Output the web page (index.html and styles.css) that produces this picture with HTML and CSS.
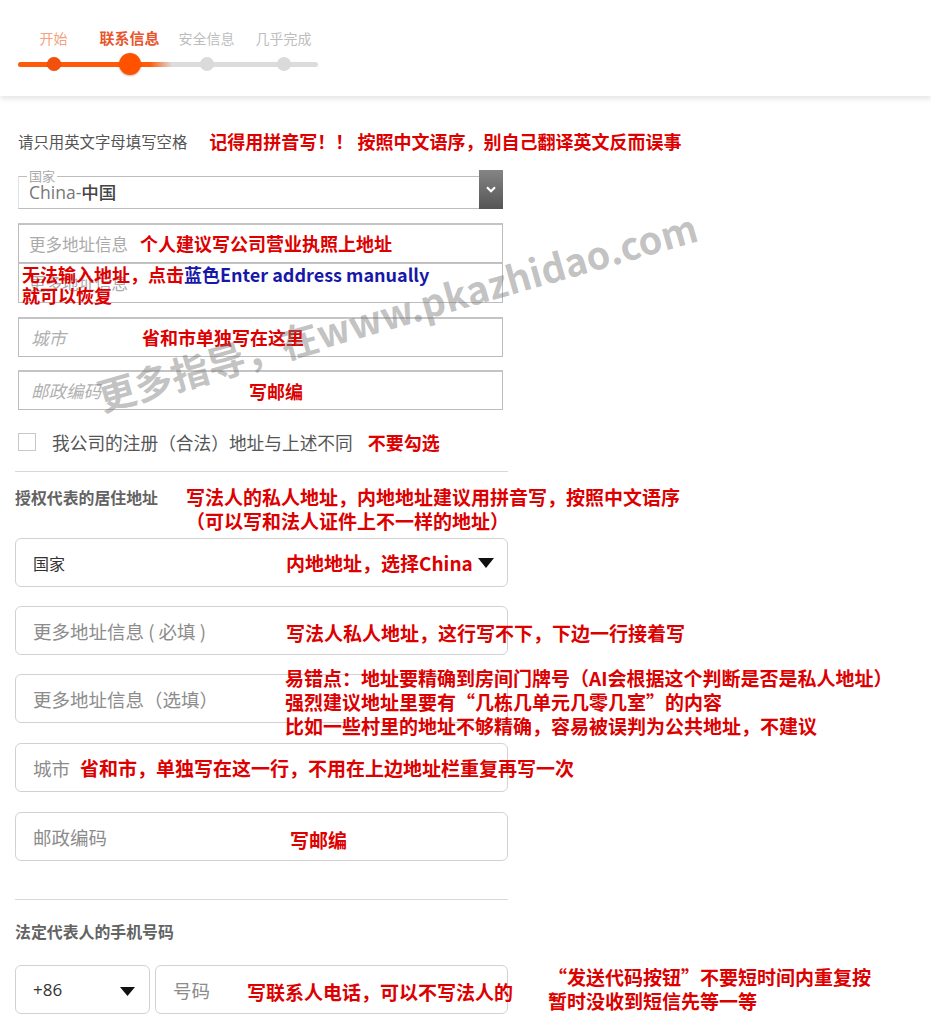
FILE: index.html
```html
<!DOCTYPE html>
<html lang="zh-CN">
<head>
<meta charset="utf-8">
<title>联系信息</title>
<link rel="stylesheet" href="styles.css">
</head>
<body>
<header class="top">
  <div class="stepper">
    <div class="track"><div class="track-fill"></div></div>
    <div class="steps">
      <div class="step done"><span class="step-label">开始</span><span class="dot-slot"><span class="dot"></span></span></div>
      <div class="step current"><span class="step-label">联系信息</span><span class="dot-slot"><span class="dot"></span></span></div>
      <div class="step todo"><span class="step-label">安全信息</span><span class="dot-slot"><span class="dot"></span></span></div>
      <div class="step todo"><span class="step-label">几乎完成</span><span class="dot-slot"><span class="dot"></span></span></div>
    </div>
  </div>
</header>

<section class="legacy">
  <div class="instr">
    <span class="instr-text">请只用英文字母填写空格</span>
    <span class="inline-note">记得用拼音写！！ 按照中文语序，别自己翻译英文反而误事</span>
  </div>

  <div class="fs">
    <div class="fs-main">
      <span class="fs-legend">国家</span>
      <span class="fs-value">China-<b>中国</b></span>
    </div>
    <div class="fs-btn">
      <svg width="10" height="7" viewBox="0 0 10 7"><path d="M1 1.2 L5 5.2 L9 1.2" fill="none" stroke="#fff" stroke-width="2.2"/></svg>
    </div>
  </div>

  <div class="obox first">
    <span class="ph">更多地址信息</span>
    <span class="note n-addr1">个人建议写公司营业执照上地址</span>
  </div>
  <div class="obox stack">
    <span class="ph">更多地址信息</span>
    <span class="note n-addr2">无法输入地址，点击<span class="blue">蓝色Enter address manually</span><br>就可以恢复</span>
  </div>
  <div class="obox">
    <span class="ph it">城市</span>
    <span class="note n-city">省和市单独写在这里</span>
  </div>
  <div class="obox near">
    <span class="ph it">邮政编码</span>
    <span class="note n-zip">写邮编</span>
  </div>

  <div class="check-row">
    <span class="checkbox"></span>
    <span class="check-label">我公司的注册（合法）地址与上述不同</span>
    <span class="inline-note">不要勾选</span>
  </div>
</section>

<div class="divider d1"></div>

<section class="modern">
  <div class="heading-row">
    <span class="heading">授权代表的居住地址</span>
    <span class="note lg n-head">写法人的私人地址，内地地址建议用拼音写，按照中文语序<br>（可以写和法人证件上不一样的地址）</span>
  </div>

  <div class="mbox first">
    <span class="mval">国家</span>
    <span class="note lg n-country">内地地址，选择China<svg class="tri" width="16" height="10" viewBox="0 0 16 10"><path d="M0 0 H16 L8 10 Z" fill="#111"/></svg></span>
  </div>
  <div class="mbox">
    <span class="mph">更多地址信息 ( 必填 )</span>
    <span class="note lg n-m2">写法人私人地址，这行写不下，下边一行接着写</span>
  </div>
  <div class="mbox">
    <span class="mph">更多地址信息（选填）</span>
    <span class="note lg n-m3">易错点：地址要精确到房间门牌号（AI会根据这个判断是否是私人地址）<br>强烈建议地址里要有“几栋几单元几零几室”的内容<br>比如一些村里的地址不够精确，容易被误判为公共地址，不建议</span>
  </div>
  <div class="mbox late">
    <span class="mph">城市</span>
    <span class="note lg n-m4">省和市，单独写在这一行，不用在上边地址栏重复再写一次</span>
  </div>
  <div class="mbox late">
    <span class="mph">邮政编码</span>
    <span class="note lg n-m5">写邮编</span>
  </div>

  <div class="divider d2"></div>

  <div class="heading-row h2">
    <span class="heading">法定代表人的手机号码</span>
  </div>

  <div class="phone-row">
    <div class="mbox code">
      <span class="mval">+86</span>
      <svg class="tri-code" width="15" height="9" viewBox="0 0 15 9"><path d="M0 0 H15 L7.5 9 Z" fill="#111"/></svg>
    </div>
    <div class="mbox num">
      <span class="mph">号码</span>
      <span class="note lg n-phone">写联系人电话，可以不写法人的</span>
    </div>
    <span class="note lg n-send">“发送代码按钮”不要短时间内重复按<br>暂时没收到短信先等一等</span>
  </div>
</section>

<div class="watermark">更多指导，在www.pkazhidao.com</div>
</body>
</html>
```
FILE: styles.css
```css
* { box-sizing: border-box; }
html, body { margin: 0; padding: 0; background: #fff; }
body {
  position: relative;
  width: 931px;
  min-height: 1024px;
  overflow: hidden;
  font-family: "Open Sans", "Noto Sans CJK SC", sans-serif;
  color: #555;
}

/* ---------- header / stepper ---------- */
.top {
  height: 96px;
  padding-top: 30px;
  box-shadow: 0 3px 5px rgba(0,0,0,0.10);
  position: relative;
  z-index: 1;
}
.stepper {
  position: relative;
  margin-left: 14px;
  width: 310px;
}
.track {
  position: absolute;
  left: 4px;
  top: 31.5px;
  width: 300px;
  height: 5px;
  border-radius: 3px;
  background: #dcdcdc;
  overflow: hidden;
}
.track-fill {
  width: 154px;
  height: 100%;
  background: linear-gradient(to right, #ff5a0a 0, #ff5a0a 132px, rgba(255,120,60,0) 154px);
}
.steps {
  position: relative;
  display: grid;
  grid-template-columns: 77px 77px 77px 77px;
}
.step {
  display: flex;
  flex-direction: column;
  align-items: center;
}
.step-label {
  font-family: "Noto Sans CJK SC", sans-serif;
  font-size: 14px;
  line-height: 16px;
  height: 16px;
  white-space: nowrap;
}
.dot-slot {
  margin-top: 7px;
  height: 22px;
  display: flex;
  align-items: center;
  justify-content: center;
}
.dot {
  display: block;
  width: 14px;
  height: 14px;
  border-radius: 50%;
}
.done .step-label { color: #f4a283; }
.done .dot { background: #f2500c; box-shadow: 0 0 1px rgba(0,0,0,0.2); }
.current .step-label { color: #e8562c; font-weight: 700; font-size: 15px; }
.current .dot { width: 22px; height: 22px; background: #ff5200; box-shadow: 0 1px 2px rgba(120,40,0,0.35); }
.todo .step-label { color: #bdbdbd; }
.todo .dot { background: #dadada; }
.step:nth-child(1) { transform: translateX(1px); }

/* ---------- annotations ---------- */
.note, .inline-note {
  font-family: "Noto Sans CJK SC", sans-serif;
  font-weight: 700;
  color: #dd0000;
  white-space: nowrap;
  font-size: 18px;
}
.note {
  position: absolute;
  line-height: 21px;
  z-index: 2;
}
.note.lg { font-size: 19px; line-height: 24px; }
.blue { color: #1818a8; }

/* ---------- legacy form ---------- */
.legacy {
  padding: 35px 0 0 18px;
}
.legacy > * { width: 485px; }
.instr {
  display: flex;
  align-items: center;
  height: 20px;
  gap: 22px;
}
.instr-text {
  font-family: "Noto Sans CJK SC", sans-serif;
  font-size: 15.4px;
  color: #555;
  white-space: nowrap;
}
.fs {
  margin-top: 19px;
  height: 39px;
  display: flex;
}
.fs-main {
  position: relative;
  flex: 1;
  margin-top: 6px;
  border: 1px solid #bdbdbd;
  border-left-color: #e2e2e2;
  border-right: none;
  display: flex;
  align-items: center;
  padding: 0 0 2px 10px;
}
.fs-legend {
  position: absolute;
  left: 8px;
  top: -8px;
  padding: 0 2px;
  background: #fff;
  font-family: "Noto Sans CJK SC", sans-serif;
  font-size: 13px;
  line-height: 14px;
  color: #aaa;
}
.fs-value {
  font-size: 17.5px;
  color: #777;
}
.fs-value b {
  font-family: "Noto Sans CJK SC", sans-serif;
  font-weight: 500;
  color: #444;
}
.fs-btn {
  width: 24px;
  height: 39px;
  background: linear-gradient(#858585, #555);
  display: flex;
  align-items: center;
  justify-content: center;
}
.obox {
  position: relative;
  height: 40px;
  margin-top: 14px;
  border: 1px solid #bcbcbc;
  border-top: 2px solid #c4c4c4;
  display: flex;
  align-items: center;
  padding-left: 10px;
}
.obox.stack { margin-top: 0; border-top-width: 1px; }
.obox.near { margin-top: 13px; }
.ph {
  font-family: "Noto Sans CJK SC", sans-serif;
  font-size: 16.5px;
  color: #aaa;
  white-space: nowrap;
}
.ph.it { font-style: italic; font-size: 17.5px; padding-left: 2px; color: #b0b0b0; }
.n-addr1 { left: 121px; top: 8px; }
.n-addr2 { left: 3px; top: 0px; }
.n-city { left: 123px; top: 8px; }
.n-zip { left: 230px; top: 9px; }

.check-row {
  margin-top: 23px;
  height: 18px;
  display: flex;
  align-items: center;
}
.checkbox {
  width: 18px;
  height: 18px;
  border: 1px solid #c8c8c8;
  background: #fff;
  flex: none;
}
.check-label {
  margin-left: 16px;
  font-family: "Noto Sans CJK SC", sans-serif;
  font-size: 17.7px;
  color: #555;
  white-space: nowrap;
}
.check-row .inline-note { margin-left: 15px; }

.divider {
  height: 1px;
  background: #d8d8d8;
  width: 493px;
}
.d1 { margin: 20px 0 0 15px; }
.d2 { margin-top: 38px; }

/* ---------- modern form ---------- */
.modern {
  padding-left: 15px;
}
.modern > * { width: 493px; }
.heading-row {
  position: relative;
  margin-top: 14px;
  height: 22px;
  display: flex;
  align-items: center;
}
.heading-row.h2 { margin-top: 20px; }
.heading {
  font-family: "Noto Sans CJK SC", sans-serif;
  font-size: 15.9px;
  font-weight: 700;
  color: #636363;
  white-space: nowrap;
}
.n-head { left: 171px; top: -1px; }

.mbox {
  position: relative;
  height: 49px;
  border: 1px solid #d2d2d2;
  border-radius: 6px;
  display: flex;
  align-items: center;
  padding-left: 17px;
  margin-top: 19px;
}
.mbox.first { margin-top: 30px; }
.mbox.late { margin-top: 20px; }
.mval {
  font-family: "Noto Sans CJK SC", sans-serif;
  font-size: 16px;
  color: #333;
  white-space: nowrap;
}
.mph {
  font-family: "Noto Sans CJK SC", sans-serif;
  font-size: 18.5px;
  color: #8c8c8c;
  white-space: nowrap;
}
.n-country { left: 270px; top: 12px; display: flex; align-items: center; }
.tri { margin-left: 5px; }
.n-m2 { left: 270px; top: 14px; }
.n-m3 { left: 269px; top: -9px; }
.n-m4 { left: 64px; top: 12px; }
.n-m5 { left: 274px; top: 15px; }

.phone-row {
  position: relative;
  margin-top: 23px;
  display: flex;
  gap: 5px;
}
.phone-row .mbox { margin-top: 0; }
.mbox.code {
  width: 135px;
  flex: none;
  justify-content: space-between;
  padding-right: 14px;
}
.mbox.code .mval { font-family: "Open Sans", sans-serif; font-size: 17px; }
.tri-code { margin-top: 3px; }
.mbox.num { flex: 1; }
.n-phone { left: 91px; top: 14px; }
.n-send { left: 533px; top: 0; }

/* ---------- watermark ---------- */
.watermark {
  position: absolute;
  left: 86px;
  top: 291px;
  font-family: "Noto Sans CJK SC", sans-serif;
  font-weight: 700;
  font-size: 38px;
  line-height: 40px;
  color: rgba(120,120,120,0.45);
  white-space: nowrap;
  transform: rotate(-16deg);
  transform-origin: center;
  z-index: 5;
  pointer-events: none;
}
```
